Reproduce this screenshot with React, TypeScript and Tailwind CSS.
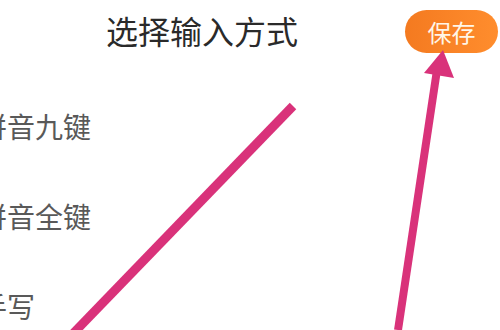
export default function App() {
  return (
    <div className="relative h-[330px] w-[500px] overflow-hidden bg-white font-['Noto_Sans_CJK_SC',sans-serif]">
      <div className="flex items-start pt-[10px] pl-[106px] pr-[2px]">
        <h1 className="mt-[1px] text-[32px] leading-[38px] font-normal text-[#2a2a2a]">
          选择输入方式
        </h1>
        <button className="ml-auto flex h-[43px] w-[93px] items-center justify-center rounded-full bg-gradient-to-r from-[#f47a20] to-[#ff8d2d] text-[24px] text-[#fff6e8]">
          保存
        </button>
      </div>

      <div className="-ml-[21px] mt-[57px] flex flex-col gap-[58px] text-[28px] leading-[32px] text-[#595959]">
        <div>拼音九键</div>
        <div>拼音全键</div>
        <div>手写</div>
      </div>

      <svg className="absolute inset-0" width="500" height="330" viewBox="0 0 500 330">
        <line x1="293" y1="106" x2="62" y2="345" stroke="#d9327a" strokeWidth="9" />
        <line x1="398" y1="330" x2="437" y2="70" stroke="#d9327a" strokeWidth="8" />
        <polygon points="443,50 424,73 454,78" fill="#d9327a" />
      </svg>
    </div>
  );
}
